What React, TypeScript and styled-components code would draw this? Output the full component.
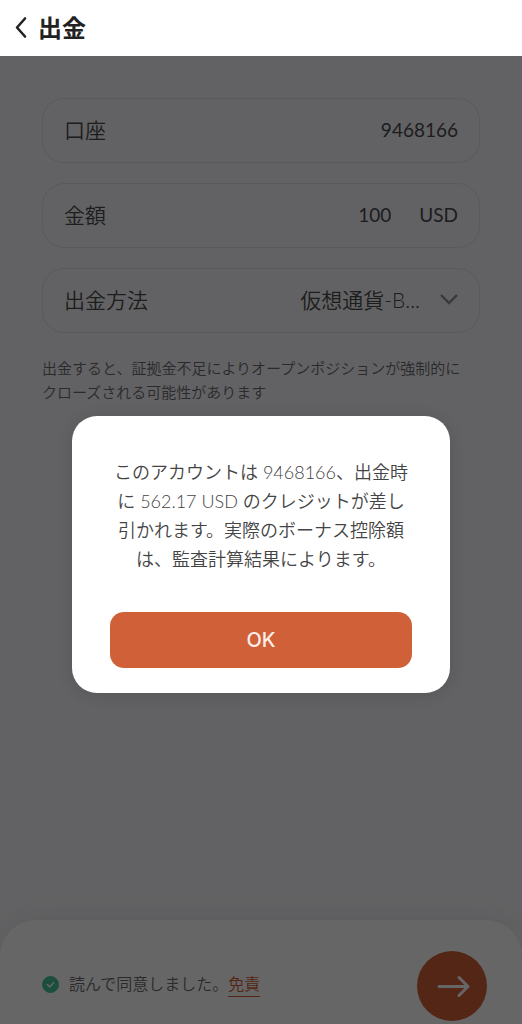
import React, { useState } from "react";
import styled, { createGlobalStyle } from "styled-components";

const GlobalStyle = createGlobalStyle`
  *, *::before, *::after { box-sizing: border-box; }
  body {
    margin: 0;
    background: #f5f5f9;
    color: #4a4a4d;
    font-family: Lato, "Noto Sans CJK JP", sans-serif;
    font-weight: 350;
  }
  button, input, select { font: inherit; color: inherit; }
`;

const Page = styled.div`
  display: flex;
  flex-direction: column;
  min-height: 100vh;
`;

const Header = styled.header`
  display: flex;
  align-items: center;
  gap: 8px;
  height: 56px;
  padding: 0 14px;
  background: #fff;
  color: #222;
`;

const BackButton = styled.button`
  display: flex;
  padding: 0;
  border: 0;
  background: none;
`;

const Title = styled.h1`
  margin: 0;
  font-size: 24px;
  line-height: 32px;
  font-weight: 700;
`;

const Body = styled.div`
  position: relative;
  flex: 1;
  display: flex;
  flex-direction: column;
`;

const Form = styled.main`
  flex: 1;
  display: flex;
  flex-direction: column;
  gap: 20px;
  padding: 42px 42px 24px;
`;

const Field = styled.div`
  display: flex;
  align-items: center;
  height: 65px;
  padding: 0 21px 3px;
  border: 1px solid #e0e0e5;
  border-radius: 22px;
`;

const FieldLabel = styled.label`
  flex: none;
  font-size: 21px;
`;

const FieldInput = styled.input`
  flex: 1;
  min-width: 0;
  padding: 0;
  border: 0;
  outline: 0;
  background: none;
  text-align: right;
  font-size: 19px;
  font-weight: 400;
`;

const Unit = styled.span`
  margin-left: 28px;
  font-size: 19px;
  font-weight: 400;
`;

const FieldSelect = styled.select`
  flex: 1;
  min-width: 0;
  padding: 0;
  margin-right: 20px;
  appearance: none;
  border: 0;
  outline: 0;
  background: none;
  text-align: right;
  text-align-last: right;
  font-size: 21px;
`;

const Hint = styled.p`
  margin: 3px 0 0;
  padding-right: 8px;
  font-size: 15px;
  line-height: 24px;
  color: #6a6a6d;
`;

const Footer = styled.footer`
  display: flex;
  align-items: center;
  padding: 31px 35px 3px 42px;
  border-radius: 36px 36px 0 0;
  background: #fff;
  box-shadow: 0 -4px 24px rgba(0, 0, 0, 0.06);
`;

const Consent = styled.div`
  display: flex;
  align-items: center;
  padding-bottom: 4px;
  font-size: 16px;
  line-height: 24px;
`;

const Agree = styled.label`
  display: flex;
  align-items: center;
  gap: 10px;
  color: #6a6a6d;
`;

const CheckWrap = styled.span`
  display: grid;
  width: 17px;
  height: 17px;

  & > * { grid-area: 1 / 1; }
  svg { pointer-events: none; }
`;

const CheckInput = styled.input`
  appearance: none;
  width: 17px;
  height: 17px;
  margin: 0;
  border: 1px solid #48c39a;
  border-radius: 50%;

  &:checked { background: #48c39a; }
`;

const TermsLink = styled.a`
  border-bottom: 1px solid #d06038;
  color: #d06038;
  text-decoration: none;
`;

const NextButton = styled.button`
  display: flex;
  align-items: center;
  justify-content: center;
  width: 70px;
  height: 70px;
  margin-left: auto;
  padding: 0;
  border: 0;
  border-radius: 50%;
  background: #d06038;
  color: #fff;
`;

const Overlay = styled.div`
  position: absolute;
  inset: 0;
  display: flex;
  align-items: center;
  padding: 28px 72px 0;
  background: rgba(0, 0, 0, 0.6);
`;

const Dialog = styled.div`
  flex: 1;
  padding: 42px 38px 25px;
  border-radius: 25px;
  background: #fff;
  box-shadow: 0 2px 16px rgba(0, 0, 0, 0.12);
`;

const Message = styled.p`
  margin: 0 0 38px;
  color: #444;
  font-size: 18px;
  line-height: 29px;
  text-align: center;
`;

const ConfirmButton = styled.button`
  width: 100%;
  height: 56px;
  border: 0;
  border-radius: 14px;
  background: #d06038;
  color: #fbeee8;
  font-family: Inter, sans-serif;
  font-size: 20px;
  font-weight: 500;
`;

export default function App() {
  const [amount, setAmount] = useState("100");
  const [agreed, setAgreed] = useState(true);
  const [open, setOpen] = useState(true);

  return (
    <>
      <GlobalStyle />
      <Page>
        <Header>
          <BackButton type="button" aria-label="戻る">
            <svg width="16" height="24" viewBox="0 0 16 24" fill="none" stroke="currentColor" strokeWidth="2.6" strokeLinecap="round" strokeLinejoin="round">
              <path d="M11 2.5 3 11.5l8 9" />
            </svg>
          </BackButton>
          <Title>出金</Title>
        </Header>
        <Body>
          <Form>
            <Field>
              <FieldLabel htmlFor="account">口座</FieldLabel>
              <FieldInput id="account" value="9468166" readOnly />
            </Field>
            <Field>
              <FieldLabel htmlFor="amount">金額</FieldLabel>
              <FieldInput id="amount" inputMode="decimal" value={amount} onChange={(e) => setAmount(e.target.value)} />
              <Unit>USD</Unit>
            </Field>
            <Field>
              <FieldLabel htmlFor="method">出金方法</FieldLabel>
              <FieldSelect id="method">
                <option>仮想通貨-B...</option>
              </FieldSelect>
              <svg width="18" height="12" viewBox="0 0 18 12" fill="none" stroke="#8f8f93" strokeWidth="2.4">
                <path d="M1 2 9 10l8-8" />
              </svg>
            </Field>
            <Hint>出金すると、証拠金不足によりオープンポジションが強制的にクローズされる可能性があります</Hint>
          </Form>
          <Footer>
            <Consent>
              <Agree>
                <CheckWrap>
                  <CheckInput type="checkbox" checked={agreed} onChange={(e) => setAgreed(e.target.checked)} />
                  <svg width="17" height="17" viewBox="0 0 17 17" fill="none" stroke="#fff" strokeWidth="1.5" strokeLinecap="round" strokeLinejoin="round">
                    <path d="m5.5 8.7 2.2 2.2 4-4.2" />
                  </svg>
                </CheckWrap>
                読んで同意しました。
              </Agree>
              <TermsLink href="#terms">免責</TermsLink>
            </Consent>
            <NextButton type="button" aria-label="次へ">
              <svg width="36" height="22" viewBox="0 0 36 22" fill="none" stroke="currentColor" strokeWidth="3" strokeLinecap="round" strokeLinejoin="round">
                <path d="M5 11.5h29M25 2.5l9 9-9 9" />
              </svg>
            </NextButton>
          </Footer>
          {open && (
            <Overlay>
              <Dialog role="dialog" aria-modal="true" aria-describedby="message">
                <Message id="message">
                  このアカウントは 9468166、出金時に 562.17 USD のクレジットが差し引かれます。実際のボーナス控除額は、監査計算結果によります。
                </Message>
                <ConfirmButton type="button" onClick={() => setOpen(false)}>OK</ConfirmButton>
              </Dialog>
            </Overlay>
          )}
        </Body>
      </Page>
    </>
  );
}
